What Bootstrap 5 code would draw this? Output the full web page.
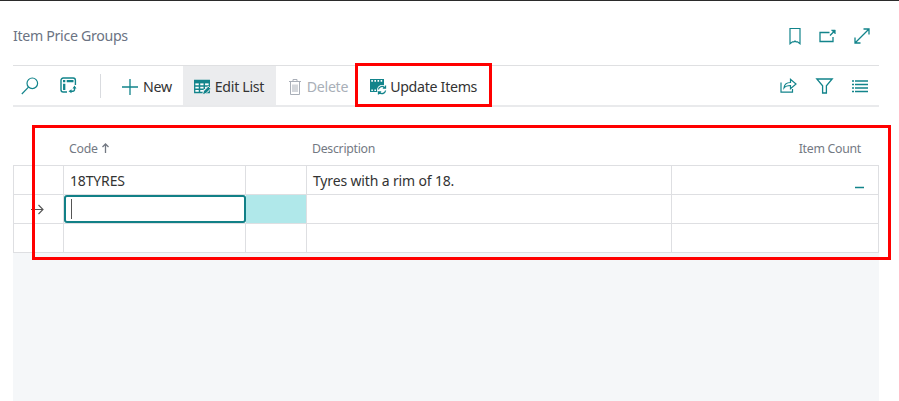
<!DOCTYPE html>
<html lang="en">
<head>
<meta charset="utf-8">
<meta name="viewport" content="width=device-width, initial-scale=1">
<title>Item Price Groups</title>
<link href="https://cdn.jsdelivr.net/npm/bootstrap@5.3.0/dist/css/bootstrap.min.css" rel="stylesheet">
<style>
body{font-family:"Noto Sans","Open Sans",sans-serif;font-size:14px;line-height:20px;letter-spacing:-.15px;color:#333;height:401px;overflow:hidden;background:#fff}
.page{border-top:1px solid #2b2b2b;height:401px;padding:0 20px 0 13px}
.title-row{height:64px;padding-top:6px}
.title-row h1{font-size:14.2px;line-height:20px;color:#6b7383;font-weight:400;letter-spacing:-.32px}
.title-icons{gap:18px;padding-right:9px}
svg{display:block;fill:none;stroke:#12848b;flex:none;overflow:visible}
.toolbar{height:42px;border-top:1px solid #dfe0e2;border-bottom:2px solid #e9eaec}
.tools-left{padding-left:8px}
.tools-right{padding-right:11px;gap:19px}
.tool{height:39px;border:0;background:none;padding:2px 0 0;color:#333;white-space:nowrap;font-size:14.2px;letter-spacing:-.3px}
.tool.chosen{background:#ebecee;width:93px;padding-left:11px;gap:4px;margin-left:11px}
.tool.off{color:#a9afb8;gap:6px;margin-left:13px}
.tool.off svg{stroke:#a9afb8}
.tool.create{gap:5px;margin-left:21px}
.tool.refresh{gap:3px;margin-left:22px}
.layout-icon{margin-left:21px}
.rule{width:1px;height:24px;background:#d9dbdf;margin-left:23px}
.grid-head{height:58px;color:#737983;font-size:12.3px;letter-spacing:-.28px;padding-top:32px;line-height:20px}
.head-code{width:299px;padding-left:56px;gap:4px}
.head-code svg{margin-top:4px;stroke:#737983}
.head-count{padding-right:18px}
.line{height:29px;border-bottom:1px solid #dedfe2;background:#fff}
.line>div{border-right:1px solid #dedfe2;line-height:29px;white-space:nowrap}
.sheet{border:1px solid #dedfe2;border-width:1px 0 0 1px}
.c1{width:50px}.c2{width:182px}.c3{width:61px}.c4{width:365px}.c5{width:207px;padding:0 14px 6px 0}
.c2,.c4{padding-left:6px}
.here{padding-left:17px}
.here svg{stroke:#555}
.line>.entry{box-shadow:inset 0 0 0 2px #118087;border:0;border-radius:3px;background:#fff;padding-left:7px}
.caret{width:1px;height:20px;background:#555}
.tint{background:#b0e8ea}
.rest{background:#f5f7f9}
.frame{position:absolute;border:3px solid #f00;pointer-events:none;z-index:3}
.frame-action{left:355px;top:63px;width:137px;height:44px}
.frame-list{left:32px;top:125px;width:859px;height:135px}
</style>
</head>
<body class="position-relative">
<main class="page d-flex flex-column">
  <header class="title-row d-flex align-items-center justify-content-between">
    <h1 class="m-0">Item Price Groups</h1>
    <div class="title-icons d-flex align-items-center">
      <svg width="12" height="18" viewBox="0 0 12 18"><path d="M1 1.500h10v15.300l-2.500-2H7L6 14l-1 .8H3.500l-2.500 2z" stroke-width="1.200"/></svg>
      <svg width="17" height="16" viewBox="0 0 17 16"><path d="M10.500 4.500H1v9h13V9M11 7.500l4-4" stroke-width="1.300"/><path d="M12.300 2h4v4z" fill="#12848b" stroke-width=".5"/></svg>
      <svg width="16" height="16" viewBox="0 0 16 16"><path d="M1 15L15 1M9.500 1H15v5.500M1 9.500V15h5.500" stroke-width="1.300"/></svg>
    </div>
  </header>
  <nav class="toolbar d-flex align-items-center justify-content-between">
    <div class="tools-left d-flex align-items-center">
      <svg width="18" height="18" viewBox="0 0 18 18"><circle cx="11.300" cy="6.300" r="5.300" stroke-width="1.200"/><path d="M7.500 10.200L.8 17" stroke-width="1.200"/></svg>
      <svg class="layout-icon" width="17" height="17" viewBox="0 0 17 17"><path d="M7 15H3.200A2.200 2.200 0 0 1 1 12.800V3.200A2.200 2.200 0 0 1 3.200 1h10A2.200 2.200 0 0 1 15.400 3.200V8" stroke-width="1.400"/><path d="M3 4.200h2.300M6.700 4.200h6.800M4.200 6.800V13" stroke-width="2.300"/><path d="M14.500 10.500v2.200a1.500 1.500 0 0 1-1.500 1.500h-2" stroke-width="1.400"/><path d="M14.500 8.500l2 3h-4zM8.500 14.200l3-2v4z" fill="#12848b" stroke="none"/></svg>
      <span class="rule"></span>
      <button class="tool create d-flex align-items-center"><svg width="16" height="16" viewBox="0 0 16 16"><path d="M8 0v16M0 8h16" stroke-width="1.300"/></svg><span>New</span></button>
      <button class="tool chosen d-flex align-items-center"><svg width="17" height="16" viewBox="0 0 17 16"><path d="M.7 1.500h14.600v12H.7z" fill="#fff" stroke-width="1.300"/><path d="M.7 7h14.600M.7 10.300h9M5.500 3v10M10.300 3v7" stroke-width="1.500"/><path d="M0 2.700h16" stroke-width="3.400"/><path d="M8.500 15.800l1-3.800 4.800-4.800 2.500 2.500-4.800 4.800z" fill="#12848b" stroke="#ebecee"/></svg><span>Edit List</span></button>
      <button class="tool off d-flex align-items-center"><svg width="12" height="16" viewBox="0 0 12 16"><path d="M0 2.500h12M4 2V.5h4V2M1.500 3v12.500h9V3M4 5.500v7.500M6 5.500v7.500M8 5.500v7.500"/></svg><span>Delete</span></button>
      <button class="tool refresh d-flex align-items-center"><svg width="17" height="17" viewBox="0 0 17 17"><path d="M0 1h14v13H0z" fill="#12848b" stroke="none"/><path d="M1.300 2.900h12M1.300 12.200h6" stroke="#fff" stroke-width="1.600" stroke-dasharray="1.600 1.500"/><circle cx="12" cy="12" r="5" fill="#fff" stroke="none"/><path d="M8.400 11.500a3.700 3.700 0 0 1 6.500-1.700M15.600 12.500a3.700 3.700 0 0 1-6.500 1.800M15.500 7.500v2.700h-2.700M8.500 16.500v-2.700h2.700" stroke-width="1.300"/></svg><span>Update Items</span></button>
    </div>
    <div class="tools-right d-flex align-items-center">
      <svg width="17" height="15" viewBox="0 0 17 15"><path d="M1 4.500v9.700h11.500V11M4 10c.3-3.800 2.700-5.500 6.500-5.500V1.200L16 6l-5.500 4.700V7.500C7.500 7.500 5.500 8 4 10z" stroke-width="1.200"/></svg>
      <svg width="17" height="16" viewBox="0 0 17 16"><path d="M.8 1h15.400L10.400 7.800V15H6.600V7.800z" stroke-width="1.300"/></svg>
      <svg width="16" height="12" viewBox="0 0 16 12"><path d="M0 1h2M3 1h13M0 4.500h2M3 4.500h13M0 8h2M3 8h13M0 11.500h2M3 11.500h13" stroke-width="1.300"/></svg>
    </div>
  </nav>
  <section>
    <div class="grid-head d-flex">
      <div class="head-code d-flex">Code<svg width="7" height="10" viewBox="0 0 7 10"><path d="M3.500 10V1M.5 4l3-3 3 3" stroke-width="1.300"/></svg></div>
      <div class="flex-grow-1">Description</div>
      <div class="head-count">Item Count</div>
    </div>
    <div class="sheet">
      <div class="line d-flex"><div class="c1"></div><div class="c2">18TYRES</div><div class="c3"></div><div class="c4">Tyres with a rim of 18.</div><div class="c5 d-flex justify-content-end align-items-end"><svg width="9" height="1" viewBox="0 0 9 1"><path d="M0 .5h9" stroke-width="1.500"/></svg></div></div>
      <div class="line d-flex"><div class="c1 here d-flex align-items-center"><svg width="13" height="11" viewBox="0 0 13 11"><path d="M0 5.500h12M7.500 1L12 5.500 7.500 10" stroke-width="1.100"/></svg></div><div class="c2 entry d-flex align-items-center"><span class="caret"></span></div><div class="c3 tint"></div><div class="c4"></div><div class="c5"></div></div>
      <div class="line d-flex"><div class="c1"></div><div class="c2"></div><div class="c3"></div><div class="c4"></div><div class="c5"></div></div>
    </div>
  </section>
  <div class="rest flex-grow-1"></div>
</main>
<div class="frame frame-action"></div>
<div class="frame frame-list"></div>
<script src="https://cdn.jsdelivr.net/npm/bootstrap@5.3.0/dist/js/bootstrap.bundle.min.js"></script>
</body>
</html>
